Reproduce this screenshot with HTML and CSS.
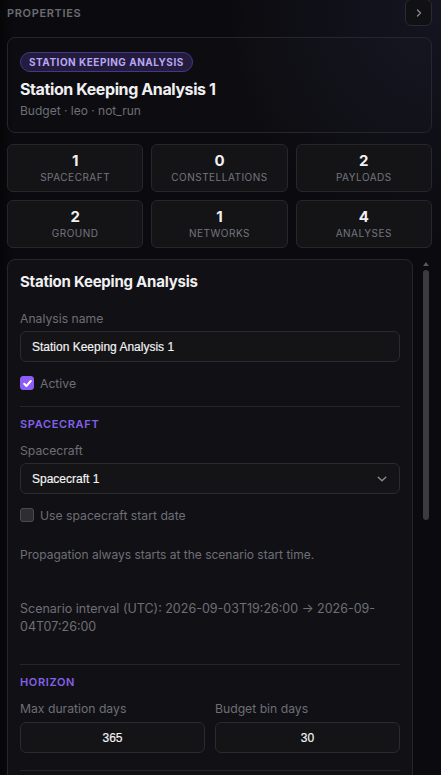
FILE: index.html
```html
<!DOCTYPE html>
<html lang="en">
<head>
<meta charset="utf-8">
<title>Properties</title>
<link rel="stylesheet" href="styles.css">
</head>
<body>
<div class="app">
  <header class="top">
    <span class="top-title">Properties</span>
    <button class="collapse" type="button" aria-label="Collapse panel">
      <svg width="8" height="10" viewBox="0 0 8 10"><path d="M2.5 2l3 3-3 3" fill="none" stroke="#85858d" stroke-width="1.4" stroke-linecap="round" stroke-linejoin="round"/></svg>
    </button>
  </header>

  <section class="summary">
    <span class="badge">Station Keeping Analysis</span>
    <h1 class="summary-title">Station Keeping Analysis 1</h1>
    <p class="summary-meta">Budget · leo · not_run</p>
  </section>

  <div class="stats">
    <div class="stat"><span class="stat-num">1</span><span class="stat-label">Spacecraft</span></div>
    <div class="stat"><span class="stat-num">0</span><span class="stat-label">Constellations</span></div>
    <div class="stat"><span class="stat-num">2</span><span class="stat-label">Payloads</span></div>
    <div class="stat"><span class="stat-num">2</span><span class="stat-label">Ground</span></div>
    <div class="stat"><span class="stat-num">1</span><span class="stat-label">Networks</span></div>
    <div class="stat"><span class="stat-num">4</span><span class="stat-label">Analyses</span></div>
  </div>

  <div class="scroll">
    <div class="scroll-body">
      <div class="panel">
        <h2 class="panel-title">Station Keeping Analysis</h2>

        <div class="field">
          <label class="field-label">Analysis name</label>
          <div class="input">Station Keeping Analysis 1</div>
        </div>

        <div class="check-row">
          <span class="box box-on">
            <svg width="11" height="11" viewBox="0 0 11 11"><path d="M2.2 5.8l2.2 2.2 4.4-5" fill="none" stroke="#fff" stroke-width="2" stroke-linecap="round" stroke-linejoin="round"/></svg>
          </span>
          <span class="check-label">Active</span>
        </div>

        <hr class="divider">

        <h3 class="section-title">Spacecraft</h3>
        <div class="field">
          <label class="field-label">Spacecraft</label>
          <div class="input select">
            <span>Spacecraft 1</span>
            <svg width="10" height="6" viewBox="0 0 10 6"><path d="M1.2 1.2l3.8 3.6 3.8-3.6" fill="none" stroke="#8a8a92" stroke-width="1.4" stroke-linecap="round" stroke-linejoin="round"/></svg>
          </div>
        </div>

        <div class="check-row">
          <span class="box"></span>
          <span class="check-label">Use spacecraft start date</span>
        </div>

        <p class="note">Propagation always starts at the scenario start time.</p>
        <p class="note note-interval">Scenario interval (UTC): 2026-09-03T19:26:00 → 2026-09-04T07:26:00</p>

        <hr class="divider divider-late">

        <h3 class="section-title">Horizon</h3>
        <div class="pair">
          <div class="field">
            <label class="field-label">Max duration days</label>
            <div class="input num">365</div>
          </div>
          <div class="field">
            <label class="field-label">Budget bin days</label>
            <div class="input num">30</div>
          </div>
        </div>

        <hr class="divider divider-end">
      </div>
    </div>
    <div class="scrollbar">
      <span class="sb-up"></span>
      <span class="sb-thumb"></span>
    </div>
  </div>
</div>
</body>
</html>
```

FILE: styles.css
```css
* { box-sizing: border-box; }

html, body {
  margin: 0;
  height: 100%;
}

body {
  overflow: hidden;
  font-family: Inter, "Noto Sans", sans-serif;
  color: #ededf0;
  background:
    radial-gradient(ellipse 70% 45% at 100% 0%, rgba(40, 40, 70, 0.35), transparent 70%),
    linear-gradient(90deg, #060608 0px, #0b0b0f 14px, #0b0b0f 100%);
}

.app {
  height: 100%;
  padding: 0 9px 0 7px;
  display: flex;
  flex-direction: column;
}

/* header */
.top {
  height: 26px;
  flex: none;
  display: flex;
  align-items: center;
  justify-content: space-between;
}

.top-title {
  font-size: 11px;
  font-weight: 600;
  letter-spacing: 0.06em;
  text-transform: uppercase;
  color: #6b6b73;
}

.collapse {
  width: 27px;
  height: 27px;
  margin-top: -1px;
  padding: 0;
  border: 1px solid #2a2a30;
  border-radius: 6px;
  background: #101015;
  display: flex;
  align-items: center;
  justify-content: center;
}

/* summary card */
.summary {
  flex: none;
  margin-top: 11px;
  padding: 14px 12px 13px;
  border: 1px solid #26262c;
  border-radius: 8px;
  background: rgba(255, 255, 255, 0.012);
  display: flex;
  flex-direction: column;
  align-items: flex-start;
}

.badge {
  height: 20px;
  line-height: 18px;
  padding: 0 8px;
  border: 1px solid #45378a;
  border-radius: 10px;
  background: #231c3d;
  color: #b8a6f2;
  font-size: 10px;
  font-weight: 700;
  letter-spacing: 0.05em;
  text-transform: uppercase;
}

.summary-title {
  margin: 6px 0 0;
  font-size: 16px;
  line-height: 22px;
  font-weight: 700;
  letter-spacing: -0.025em;
  color: #f0f0f2;
}

.summary-meta {
  margin: 3px 0 0;
  font-size: 12px;
  line-height: 16px;
  color: #6e6e76;
}

/* counters */
.stats {
  flex: none;
  margin-top: 11px;
  display: grid;
  grid-template-columns: repeat(3, 1fr);
  gap: 8px;
}

.stat {
  padding: 7px 4px;
  border: 1px solid #27272b;
  border-radius: 6px;
  background: #141417;
  display: flex;
  flex-direction: column;
  align-items: center;
}

.stat-num {
  font-size: 15px;
  line-height: 18px;
  font-weight: 700;
  color: #f0f0f2;
}

.stat-label {
  font-size: 10px;
  line-height: 14px;
  letter-spacing: 0.05em;
  text-transform: uppercase;
  color: #75757d;
}

/* scrolling editor area */
.scroll {
  flex: 1;
  min-height: 0;
  margin-top: 11px;
  display: flex;
  gap: 7px;
  overflow: hidden;
}

.scroll-body {
  flex: 1;
  min-width: 0;
}

.scrollbar {
  width: 12px;
  flex: none;
  display: flex;
  flex-direction: column;
  align-items: center;
}

.sb-up {
  margin-top: 3px;
  width: 0;
  height: 0;
  border-left: 3px solid transparent;
  border-right: 3px solid transparent;
  border-bottom: 4px solid #56565c;
}

.sb-thumb {
  margin-top: 4px;
  width: 6px;
  height: 250px;
  border-radius: 3px;
  background: #3b3b40;
}

.panel {
  min-height: 640px;
  padding: 12px;
  border: 1px solid #27272b;
  border-radius: 8px;
  background: #111115;
}

.panel-title {
  margin: 0 0 19px;
  font-size: 15px;
  line-height: 20px;
  font-weight: 700;
  letter-spacing: -0.015em;
  color: #f0f0f2;
}

.field-label {
  display: block;
  margin-bottom: 4px;
  font-size: 12.2px;
  line-height: 16px;
  color: #6e6e76;
}

.input {
  height: 31px;
  padding: 0 11px;
  border: 1px solid #2a2a2f;
  border-radius: 6px;
  background: #141417;
  display: flex;
  align-items: center;
  font-family: "Liberation Sans", Arial, sans-serif;
  font-size: 12px;
  color: #f4f4f6;
  -webkit-text-stroke: 0.15px #f4f4f6;
}

.select {
  justify-content: space-between;
  padding-right: 12px;
}

.num {
  justify-content: center;
}

.check-row {
  margin-top: 13px;
  height: 16px;
  display: flex;
  align-items: center;
  gap: 6px;
}

.box {
  width: 14px;
  height: 14px;
  border-radius: 3px;
  border: 1px solid #4a4a50;
  background: #2e2e32;
  display: flex;
  align-items: center;
  justify-content: center;
}

.box-on {
  border-color: #8b5cf6;
  background: #8b5cf6;
}

.check-label {
  font-size: 12.2px;
  color: #6e6e76;
}

.divider {
  margin: 15px 0 9px;
  border: 0;
  border-top: 1px solid #26262a;
}

.divider-late {
  margin-top: 28px;
}

.divider-end {
  margin-top: 17px;
}

.section-title {
  margin: 0 0 11px;
  font-size: 11px;
  line-height: 16px;
  font-weight: 600;
  letter-spacing: 0.06em;
  text-transform: uppercase;
  color: #8360e8;
}

.note {
  margin: 23px 0 0;
  font-size: 12px;
  line-height: 18px;
  color: #6e6e76;
}

.note-interval {
  margin-top: 36px;
  font-size: 12.5px;
}

.pair {
  display: grid;
  grid-template-columns: 1fr 1fr;
  gap: 10px;
}

.pair .field-label {
  margin-bottom: 5px;
}
```
